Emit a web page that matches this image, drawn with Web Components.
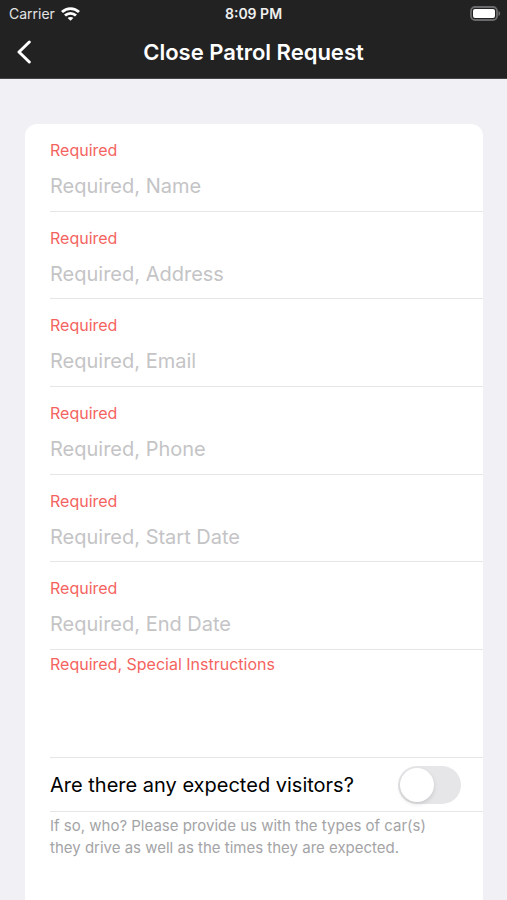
<!DOCTYPE html>
<html lang="en">
<head>
<meta charset="utf-8">
<meta name="viewport" content="width=device-width, initial-scale=1">
<title>Close Patrol Request</title>
<style>
body { margin: 0; background: #f0f0f5; font-family: Inter, "Liberation Sans", sans-serif; }
</style>
</head>
<body>
<patrol-page>
  <status-bar slot="top" carrier="Carrier" time="8:09 PM"></status-bar>
  <nav-bar slot="top">Close Patrol Request</nav-bar>
  <form-card>
    <text-field slot="fields" hint="Required, Name"></text-field>
    <text-field slot="fields" hint="Required, Address"></text-field>
    <text-field slot="fields" hint="Required, Email"></text-field>
    <text-field slot="fields" hint="Required, Phone"></text-field>
    <text-field slot="fields" hint="Required, Start Date"></text-field>
    <text-field slot="fields" hint="Required, End Date"></text-field>
    <notes-field>Required, Special Instructions</notes-field>
    <switch-row>Are there any expected visitors?</switch-row>
    <help-note>If so, who? Please provide us with the types of car(s) they drive as well as the times they are expected.</help-note>
  </form-card>
</patrol-page>
<script>
const define = (name, html, setup) => customElements.define(name, class extends HTMLElement {
  constructor() {
    super();
    this.attachShadow({ mode: "open" }).innerHTML = html;
  }
  connectedCallback() { if (setup) setup(this, this.shadowRoot); }
});

define("patrol-page", `
<style>
:host { display: flex; flex-direction: column; min-height: 100vh; }
header { background: #222; color: #fff; }
main { flex: 1; display: flex; flex-direction: column; padding: 45px 24px 0 25px; }
</style>
<header><slot name="top"></slot></header>
<main><slot></slot></main>`);

define("status-bar", `
<style>
:host { display: grid; grid-template-columns: 1fr auto 1fr; align-items: center; height: 27px; padding: 0 6px; font-size: 14px; line-height: 20px; }
.left { display: flex; align-items: center; gap: 6px; padding-left: 3px; color: #e4e4e4; }
.time { font-weight: 600; color: #f0f0f0; }
.battery { justify-self: end; }
svg { display: block; }
</style>
<div class="left"><span class="carrier"></span>
<svg width="19" height="14" viewBox="0 0 19 14" fill="none" stroke="#fff" stroke-width="2.8" aria-label="Wi-Fi">
<path d="M1 5.1C5.8.4 13.2.4 18 5.1"/><path d="M4 8.6c3.1-3 7.9-3 11 0"/><path d="M9.5 13.800 6.600 11c1.600-1.500 4.200-1.500 5.800 0z" fill="#fff" stroke="none"/></svg></div>
<span class="time"></span>
<svg class="battery" width="31" height="15" viewBox="0 0 31 15" aria-label="Battery full">
<rect x="1" y="1" width="26" height="13" rx="4" fill="none" stroke="#6a6a6c" stroke-width="1.800"/><rect x="3" y="3" width="22" height="9" rx="2" fill="#fff"/><path d="M28.4 5c2.400.7 2.400 4.300 0 5z" fill="#6a6a6c"/></svg>`,
(host, root) => {
  root.querySelector(".carrier").textContent = host.getAttribute("carrier");
  root.querySelector(".time").textContent = host.getAttribute("time");
});

define("nav-bar", `
<style>
:host { display: grid; grid-template-columns: 48px 1fr 48px; align-items: center; height: 52px; padding-bottom: 2px; box-sizing: border-box; border-bottom: 1px solid #444; }
button { width: 48px; height: 48px; padding: 0 0 0 16px; border: 0; background: none; color: #fff; }
svg { display: block; }
h1 { margin: 0; text-align: center; font-size: 22px; line-height: 28px; font-weight: 600; }
</style>
<button type="button" aria-label="Back"><svg width="16" height="24" viewBox="0 0 16 24" fill="none" stroke="currentColor" stroke-width="3" stroke-linecap="round" stroke-linejoin="round"><path d="M13.300 2 3 12l10.300 10"/></svg></button>
<h1><slot></slot></h1>`);

define("form-card", `
<style>
:host { display: block; flex: 1; box-sizing: border-box; padding-left: 25px; background: #fff; border-radius: 12px 12px 0 0; }
.fields { display: grid; grid-auto-rows: 1fr; min-height: 526px; }
</style>
<div class="fields"><slot name="fields"></slot></div>
<slot></slot>`);

define("text-field", `
<style>
:host { display: block; box-sizing: border-box; padding-top: 14px; border-bottom: 1px solid #e6e6e8; }
label { display: block; font-size: 16px; line-height: 24px; color: #f4645f; }
input { display: block; width: 100%; box-sizing: border-box; margin: 8px 0 0; padding: 0; border: 0; outline: 0; background: none; font: inherit; font-size: 20px; line-height: 32px; height: 32px; color: #111; }
input::placeholder { color: #c4c4c6; opacity: 1; }
</style>
<label for="value">Required</label>
<input id="value" type="text">`,
(host, root) => { root.querySelector("input").placeholder = host.getAttribute("hint"); });

define("notes-field", `
<style>
:host { display: block; border-bottom: 1px solid #e6e6e8; padding-top: 2px; }
label { display: block; font-size: 16px; line-height: 24px; color: #f4645f; }
textarea { display: block; width: 100%; height: 81px; box-sizing: border-box; padding: 4px 0; border: 0; outline: 0; resize: none; background: none; font: inherit; font-size: 20px; }
</style>
<label for="value"><slot></slot></label>
<textarea id="value"></textarea>`);

define("switch-row", `
<style>
:host { display: flex; align-items: center; justify-content: space-between; height: 53px; padding-right: 22px; border-bottom: 1px solid #e6e6e8; }
label { font-size: 20px; line-height: 28px; color: #000; }
input { appearance: none; flex: none; display: flex; box-sizing: border-box; width: 63px; height: 38px; margin: 0; padding: 2px; border-radius: 19px; background: #e6e6e8; }
input::before { content: ""; width: 34px; height: 34px; border-radius: 50%; background: #fff; box-shadow: 0 2px 4px #0002; }
input:checked { justify-content: flex-end; background: #34c759; }
</style>
<label for="toggle"><slot></slot></label>
<input id="toggle" type="checkbox" role="switch">`);

define("help-note", `
<style>
:host { display: block; padding: 3px 40px 0 0; font-size: 15px; line-height: 22px; color: #a4a4a6; }
</style>
<slot></slot>`);
</script>
</body>
</html>
